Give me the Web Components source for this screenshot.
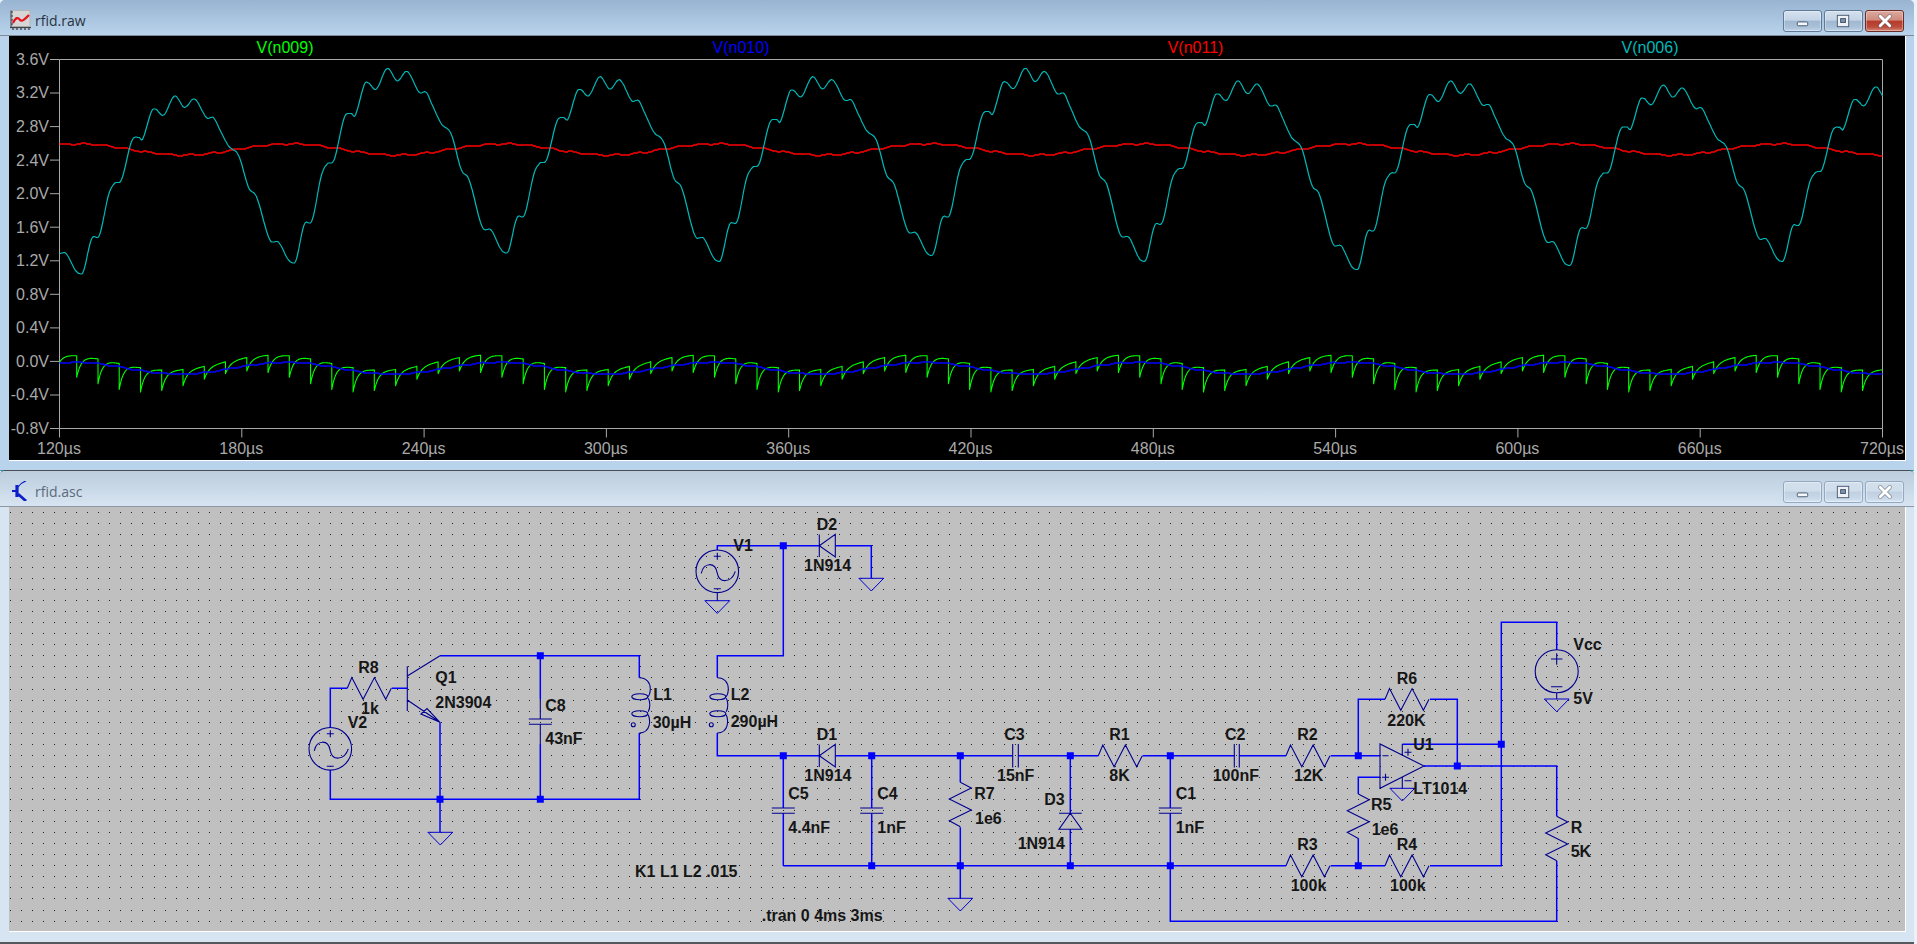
<!DOCTYPE html>
<html><head><meta charset="utf-8"><title>LTspice rfid</title>
<style>
html,body{margin:0;padding:0;height:944px;overflow:hidden;background:#eaf1f8;}
body{display:flex;flex-direction:column;width:1917px;}
</style></head>
<body>
<mdi-window caption="rfid.raw" icon="plot" active><wave-plot></wave-plot></mdi-window>
<mdi-window caption="rfid.asc" icon="sch"><rfid-schematic></rfid-schematic></mdi-window>
<script>
class CaptionButton extends HTMLElement{
  connectedCallback(){
    const kind=this.getAttribute('kind'), on=this.hasAttribute('active');
    const r=this.attachShadow({mode:'open'});
    let bg=on?'linear-gradient(#d3e0ee 0,#c4d4e6 46%,#9fb7d0 50%,#a9c0d8 80%,#c3d5e8 100%)':'linear-gradient(#d3e0ec 0,#cfdcea 46%,#c0d0e1 50%,#c8d8e9 80%,#d9e5f2 100%)';
    if(kind==='close'&&on)bg='linear-gradient(#dba99f 0,#d08a7c 46%,#b53a2a 50%,#bc4c3c 80%,#d58a7a 100%)';
    const g={min:'<rect x="14" y="11" width="11" height="4" rx="1" fill="#f5f8fb" stroke="#44566c" stroke-width="1"/>',
      max:'<rect x="13" y="4" width="12" height="12" fill="#eef2f6" stroke="#4a5a70" stroke-width="1"/><rect x="16.5" y="7.5" width="5" height="4" fill="#7f93ad" stroke="#3e4e66" stroke-width="1"/>',
      close:'<path d="M15 5 L25 15 M25 5 L15 15" stroke="#4d5866" stroke-width="4.6" stroke-linecap="round" opacity="'+(on?.55:.6)+'"/><path d="M15 5 L25 15 M25 5 L15 15" stroke="#fff" stroke-width="3" stroke-linecap="round"/>'}[kind];
    r.innerHTML=`<style>:host{display:block;width:39px;height:22px;box-sizing:border-box;border:1px solid ${on?(kind==='close'?'#6e2a22':'#5f7a98'):'#93a9c2'};border-radius:3px;background:${bg};box-shadow:inset 0 0 0 1px rgba(255,255,255,.35);}
    svg{display:block;width:37px;height:20px}</style><svg viewBox="0 0 39 20">${g}</svg>`;
  }
}
customElements.define('caption-button',CaptionButton);

class WindowIcon extends HTMLElement{
  connectedCallback(){
    const r=this.attachShadow({mode:'open'});
    const plot=`<svg viewBox="0 0 21 20" width="21" height="20"><rect x="2" y="0.5" width="18" height="16" fill="#d6d6d6" stroke="#b4b4b4"/><path d="M1 2h2M1 6h2M1 10h2M1 14h2M3 18v2M7 18v2M11 18v2M15 18v2M19 18v2" stroke="#333" stroke-width="1.2"/><path d="M0 17.5H21" stroke="#444" stroke-width="1.2"/><path d="M1 .5V18" stroke="#444" stroke-width="1"/><path d="M3 13 C6 7,8 7,10 10 C12 12,14 10,19 5" fill="none" stroke="#e8101a" stroke-width="2.2"/></svg>`;
    const sch=`<svg viewBox="0 0 21 20" width="21" height="20"><path d="M2 10H7" stroke="#0b1fc8" stroke-width="2"/><path d="M7 4V16" stroke="#0b1fc8" stroke-width="3.2"/><path d="M8 6 C10 3,13 1,16 0" fill="none" stroke="#0b1fc8" stroke-width="1.2"/><path d="M8 13 L16 20" stroke="#0b1fc8" stroke-width="2.8"/></svg>`;
    r.innerHTML=`<style>:host{display:block;width:21px;height:20px}svg{display:block}</style>${this.getAttribute('kind')==='plot'?plot:sch}`;
  }
}
customElements.define('window-icon',WindowIcon);

class MdiWindow extends HTMLElement{
  connectedCallback(){
    const on=this.hasAttribute('active');
    const r=this.attachShadow({mode:'open'});
    r.innerHTML=`<style>
    :host{display:flex;flex-direction:column;box-sizing:border-box;width:1914px;flex:none;
      height:${on?'470px':'474px'};
      background:${on?'#b9d3ec':'#d7e4f2'};
      border-radius:5px 5px 0 0;
      box-shadow:${on?'0 1px 0 #2aa5bd':'none'};
      ${on?'':'border-top:1px solid #4a4f55;border-bottom:2px solid #55595e;'}
    }
    .bar{display:flex;align-items:flex-start;box-sizing:border-box;height:36px;padding:10px 10px 0 10px;gap:4px;
      background:linear-gradient(${on?'#99b4d1,#b9d3ec':'#bccddd,#d7e4f2'});
      border-radius:5px 5px 0 0;border-bottom:1px solid ${on?'#7f8a96':'#8e98a2'};}
    .title{font:14px "Open Sans","Noto Sans",sans-serif;color:${on?'#26333f':'#5a6a7c'};line-height:22px;flex:1;white-space:nowrap;}
    .btns{display:flex;gap:2px;}
    .body{margin:0 8px 0 9px;border-right:1.5px solid #fff;border-bottom:1.5px solid #fff;height:424px;}
    ::slotted(*){display:block;width:1896px;height:424px}
    </style>
    <div class="bar"><window-icon kind="${this.getAttribute('icon')}"></window-icon><span class="title">${this.getAttribute('caption')}</span>
    <div class="btns"><caption-button kind="min" ${on?'active':''}></caption-button><caption-button kind="max" ${on?'active':''}></caption-button><caption-button kind="close" ${on?'active':''}></caption-button></div></div>
    <div class="body"><slot></slot></div>`;
  }
}
customElements.define('mdi-window',MdiWindow);

class WavePlot extends HTMLElement{
  connectedCallback(){
    const r=this.attachShadow({mode:'open'});
    const L=59.5,R=1882.5,T=59.5,B=428.5,P=212.6,TAU=Math.PI*2,PX=(R-L)/10;
    const grid=[];let txt='';
    const ylab=['3.6V','3.2V','2.8V','2.4V','2.0V','1.6V','1.2V','0.8V','0.4V','0.0V','-0.4V','-0.8V'];
    ylab.forEach((t,i)=>{const y=T+(B-T)*i/11;grid.push(`M50 ${y.toFixed(1)}H${L}`);txt+=`<text class="a" x="49" y="${(y+5.4).toFixed(1)}" text-anchor="end">${t}</text>`;});
    for(let i=0;i<=10;i++){const x=L+PX*i;grid.push(`M${x.toFixed(1)} ${B}V437.5`);txt+=`<text class="a" x="${(x-0.5).toFixed(1)}" y="454" text-anchor="middle">${120+i*60}µs</text>`;}
    // teal: one digitised period (dx from the trough, y in px), fitted to each cycle's own extremes
    const tx=[0,10,18,27,33,40,50,57,61,70,74,82,93,103,113,125,132,138,147,157,167,175,188,197,207,212.6];
    const ty=[262,227,223,183,172,168,130,126,128,100,98,104,85,97,88,108,108,120,138,148,182,192,237,240,259,262];
    const tn=ty.map(y=>(y-85)/177);
    const tang=tn.map((v,i)=>(i===0||i===tn.length-1)?0:(tn[i+1]-tn[i-1])/(tx[i+1]-tx[i-1]));
    const shape=d=>{let i=0;while(i<tx.length-2&&d>tx[i+1])i++;
      const h=tx[i+1]-tx[i],s=(d-tx[i])/h,s2=s*s,s3=s2*s;
      return (2*s3-3*s2+1)*tn[i]+(s3-2*s2+s)*h*tang[i]+(-2*s3+3*s2)*tn[i+1]+(s3-s2)*h*tang[i+1];};
    const toY=v=>362-83.9*v;
    const TV=[1.05,1.18,1.3,1.2,1.27,1.2,1.1,1.15,1.2,1.2];
    const PV=[3.17,3.5,3.4,3.4,3.5,3.35,3.35,3.3,3.28];
    const teal=[];
    for(let x=L;x<=R;x+=1){
      const rel=x-81.6,k=Math.floor(rel/P),d=rel-k*P;
      const yp=toY(k<0?3.0:PV[k]);
      const yt=toY(d<93?TV[Math.max(k,0)]:TV[k+1]);
      teal.push(x.toFixed(1)+','+(Math.round((yp+(yt-yp)*shape(d))*2)/2));
    }
    // red
    const red=[];
    for(let x=L;x<=R;x+=1){
      const y=149.5-5.6*Math.cos(TAU*(x-290)/P)+0.7*Math.cos(TAU*(x-10)/21.26);
      red.push(x.toFixed(1)+','+Math.round(y));
    }
    // blue
    const blue=[];
    for(let x=L;x<=R;x+=1){
      const y=368.2-5.9*Math.cos(TAU*(x-286)/P)+0.5*Math.cos(TAU*(x-3)/21.26);
      blue.push(x.toFixed(1)+','+Math.round(y));
    }
    // green
    const top=x=>362.5-7.5*Math.cos(TAU*(x-275)/P), bot=x=>381.5-10.5*Math.cos(TAU*(x-250)/P);
    const green=[];
    let xk=76.7-21.26;
    for(let x=L;x<=R;x+=1){
      if(x>=xk+21.26){
        xk+=21.26;
        green.push(xk.toFixed(1)+','+top(xk).toFixed(1));
        green.push(xk.toFixed(1)+','+bot(xk).toFixed(1));
      }
      const d=x-xk;
      const yt=top(x),yb=bot(xk);
      green.push(x.toFixed(1)+','+(yt+(yb-yt)*Math.exp(-d/4.6)).toFixed(1));
    }
    const labels=[['V(n009)',285,'#00ff00'],['V(n010)',741,'#0000ff'],['V(n011)',1195.5,'#ff0000'],['V(n006)',1650,'#00b8b8']];
    r.innerHTML=`<style>:host{display:block;background:#000}svg{display:block}
      text{font:16px "Liberation Sans",Arial,sans-serif}.a{fill:#a9a9a9}
      polyline{fill:none;stroke-linejoin:round}</style>
      <svg width="1896" height="424" viewBox="9 36 1896 424">
      <rect x="9" y="36" width="1896" height="424" fill="#000"/>
      <path d="M${L} ${T}H${R}V${B}H${L}Z ${grid.join(' ')}" fill="none" stroke="#a8a8a8" stroke-width="1"/>
      <polyline points="${green.join(' ')}" stroke="#00ff00" stroke-width="1.1"/>
      <polyline points="${blue.join(' ')}" stroke="#0000ff" stroke-width="1.5"/>
      <polyline points="${red.join(' ')}" stroke="#ff0000" stroke-width="1.3"/>
      <polyline points="${teal.join(' ')}" stroke="#00b8b8" stroke-width="1.2"/>
      ${txt}
      ${labels.map(l=>`<text x="${l[1]}" y="53" text-anchor="middle" fill="${l[2]}">${l[0]}</text>`).join('')}
      </svg>`;
  }
}
customElements.define('wave-plot',WavePlot);

class RfidSchematic extends HTMLElement{
  connectedCallback(){
    const r=this.attachShadow({mode:'open'});
    let dots='';
    for(let iy=0;iy<39;iy++){const y=Math.round(512.7+11.05*iy);if(y>931)break;
      for(let ix=0;ix<172;ix++){const x=Math.round(9.85+11.05*ix);if(x>1904)break;dots+=`M${x} ${y}h1v1h-1z`;}}
    const W=[],C=[],J=[],G=[];let X='';
    const w=(...p)=>{let d='M'+p[0][0]+' '+p[0][1];for(let i=1;i<p.length;i++)d+='L'+p[i][0]+' '+p[i][1];W.push(d);};
    const c=d=>C.push(d);
    const j=(x,y)=>J.push(`M${x-3.5} ${y-3.5}h7v7h-7z`);
    const gnd=(x,y)=>G.push(`M${x-12.4} ${y}H${x+12.4}L${x} ${y+12.7}Z`);
    const t=(s,x,y)=>{X+=`<text x="${x}" y="${y}">${s}</text>`;};
    const resH=(x,y)=>c(`M${x} ${y}l4.5 -10.7l11.3 21.7l11.3 -21.7l11.3 21.7l5.6 -11`);
    const resV=(x,y)=>c(`M${x} ${y}l11 5.7l-22 11l22 11l-22 10.7l11 6`);
    const capV=(x,y1,y2)=>c(`M${x-11.5} ${y1}H${x+11.5}M${x-11.5} ${y2}H${x+11.5}`);
    const capH=(x1,x2,y)=>c(`M${x1} ${y-11.7}V${y+11.7}M${x2} ${y-11.7}V${y+11.7}`);
    const diodeH=(y)=>{c(`M819.3 ${y-11.2}V${y+11.2}M835.3 ${y-11.3}V${y+11.3}L819.3 ${y}Z`);};
    const ind=(x,y)=>{c(`M${x} ${y}C${x+7} ${y} ${x+11} ${y+5} ${x+11} ${y+11}C${x+11} ${y+15} ${x+10} ${y+18} ${x+8} ${y+20}`);
      c(`M${x+9} ${y+20.5}C${x+11} ${y+24} ${x+11} ${y+30} ${x+9} ${y+34}`);
      c(`M${x+9} ${y+37}C${x+11} ${y+42} ${x+12} ${y+55} ${x} ${y+55.3}`);
      c(`M${x-7.5} ${y+19}a8 3 0 1 0 16 0a8 3 0 1 0 -16 0`);
      c(`M${x-7.5} ${y+36}a8 3 0 1 0 16 0a8 3 0 1 0 -16 0`);
      c(`M${x-8} ${y+47}a2 2 0 1 0 4 0a2 2 0 1 0 -4 0`);};
    const acs=(x,y)=>{c(`M${x-21.3} ${y}a21.3 21.3 0 1 0 42.6 0a21.3 21.3 0 1 0 -42.6 0`);
      c(`M${x-16} ${y+2}C${x-14} ${y-9} ${x-2} ${y-10} ${x} ${y+2}C${x+2} ${y+12} ${x+14} ${y+12} ${x+18} ${y}`);
      c(`M${x-3.5} ${y-15}h7M${x} ${y-18.5}v7M${x-3.5} ${y+17.5}h7`);};
    const YT=656.7,YB=800.3,YM=756.7,YG=866.7;
    w([347.3,689.3],[330.3,689.3],[330.3,729]);
    w([330.3,771],[330.3,YB],[639.3,YB],[639.3,734]);
    w([391.7,689.3],[407.3,689.3]);
    w([440,YT],[639.3,YT],[639.3,678.7]);
    w([440,723.3],[440,YB]);
    w([440,YB],[440,833.3]);
    w([540.3,YT],[540.3,700]);c('M540.3 700V720');
    w([540.3,745],[540.3,YB]);c('M540.3 725.3V745');
    j(440,YB);j(540.3,YT);j(540.3,YB);gnd(440.3,833.3);
    resH(347.3,689.3);acs(330.3,749.8);
    c('M407.3 667.3V712M407.3 677L440 656.7M407.3 701L440 723.3M421 715L427 709.5L440 723.3Z');
    capV(540.3,720,725.3);ind(639.3,678.7);
    t('R8',358.3,674);t('1k',361,715);t('V2',347.7,729);t('Q1',435.3,684);t('2N3904',435.3,708.7);
    t('C8',545.3,712);t('43nF',545.3,744.7);t('L1',653.3,701.3);t('30µH',652.7,728.7);
    w([717.3,678.3],[717.3,YT],[783.3,YT],[783.3,546.7]);
    w([717.3,551],[717.3,546.7],[819.3,546.7]);
    w([835.3,546.7],[871.3,546.7],[871.3,579.3]);
    w([717.3,734],[717.3,YM],[819.3,YM]);
    j(783.3,546.7);acs(717.3,572.3);c('M717.3 593.6V601.7');gnd(717.3,601.7);gnd(871.3,579.3);
    ind(717.3,678.7);diodeH(546.7);
    t('L2',730.7,700.7);t('290µH',730.7,728.3);t('V1',733.3,551.7);t('D2',816.7,530.7);t('1N914',804,572);
    w([835.3,YM],[1012.7,YM]);w([1018.3,YM],[1098.3,YM]);w([1142.7,YM],[1234.3,YM]);w([1239.3,YM],[1286,YM]);w([1330.7,YM],[1380,YM]);
    diodeH(YM);capH(1012.7,1018.3,YM);capH(1234.3,1239.3,YM);resH(1098.3,YM);resH(1286,YM);
    [783.3,871.7,960.3,1070.3,1170.3,1358.3].forEach(x=>j(x,YM));
    w([783.3,YG],[1286,YG]);w([1330.7,YG],[1385,YG]);w([1430,YG],[1501.3,YG],[1501.3,623.3],[1556.7,623.3],[1556.7,651]);
    resH(1286,YG);resH(1385,YG);
    [871.7,960.3,1070.3,1170.3,1358.3].forEach(x=>j(x,YG));
    w([783.3,YM],[783.3,809]);w([783.3,814.3],[783.3,YG]);capV(783.3,809,814.3);
    w([871.7,YM],[871.7,809]);w([871.7,814.3],[871.7,YG]);capV(871.7,809,814.3);
    w([1170.3,YM],[1170.3,809]);w([1170.3,814.3],[1170.3,922.3],[1556.7,922.3],[1556.7,861.7]);capV(1170.3,809,814.3);
    w([960.3,YM],[960.3,783.3]);w([960.3,828.3],[960.3,899.3]);resV(960.3,783.3);gnd(960.3,899.3);
    w([1070.3,YM],[1070.3,814.3]);w([1070.3,830.3],[1070.3,YG]);
    c('M1059 814.3H1081.7M1070.3 814.3L1081.7 830.3H1059Z');
    t('D1',816.7,740.7);t('1N914',804.3,781.7);t('C5',788.3,800);t('4.4nF',788.3,834);t('C4',877.3,800);t('1nF',877.3,834);
    t('R7',974.3,800);t('1e6',975,825);t('C3',1004.3,740.7);t('15nF',997,781.7);t('D3',1044.3,805.7);t('1N914',1017.7,850);
    t('R1',1109.3,740.7);t('8K',1109.3,781.7);t('C1',1175.7,800);t('1nF',1175.7,834);
    c('M1380 745V789.3L1424 767Z M1382.5 756.7h6 M1382 778.3h7M1385.5 774.8v7 M1404.5 753.3h7M1408 749.8v7 M1404.5 781.7h7');
    c('M1402.3 756V745.3M1402.3 778V789.3');
    w([1402.3,745.3],[1501.3,745.3]);j(1501.3,745.3);
    w([1424,767],[1556.7,767],[1556.7,817.3]);j(1457.3,767);
    w([1457.3,767],[1457.3,700.3],[1430,700.3]);w([1385,700.3],[1358.3,700.3],[1358.3,YM]);resH(1385,700.3);
    w([1380,778.3],[1358.3,778.3],[1358.3,795]);w([1358.3,839.3],[1358.3,YG]);resV(1358.3,795);
    gnd(1402.3,789.3);
    resV(1556.7,817.3);
    c('M1535.2 672.3a21.5 21.5 0 1 0 43 0a21.5 21.5 0 1 0 -43 0 M1551 660h11.4M1556.7 654.3v11.4 M1551 687.7h11.4 M1556.7 693.8V700');
    gnd(1556.7,700);
    t('C2',1225,740.7);t('100nF',1212.7,781.7);t('R2',1297.3,740.7);t('12K',1294,781.7);t('R6',1396.7,684.7);t('220K',1387.3,726.7);
    t('U1',1413.3,751.3);t('LT1014',1413.3,795);t('R5',1371,811);t('1e6',1371.7,836);t('R3',1297.3,850.7);t('100k',1290.7,891.7);
    t('R4',1396.7,850.7);t('100k',1390,891.7);t('Vcc',1573.3,650.7);t('5V',1573.3,705.3);t('R',1570.7,834);t('5K',1570.7,858);
    t('K1 L1 L2 .015',635,877.7);t('.tran 0 4ms 3ms',761.7,921.7);
    r.innerHTML=`<style>:host{display:block;background:#c0c0c0}svg{display:block}
      text{font:bold 16px "Liberation Sans",Arial,sans-serif;fill:#161616}</style>
      <svg width="1896" height="424" viewBox="9 508 1896 424">
      <path d="${dots}" fill="#222" shape-rendering="crispEdges"/>
      <path d="${W.join(' ')}" fill="none" stroke="#0000ff" stroke-width="1.5"/>
      <path d="${C.join(' ')}" fill="none" stroke="#000090" stroke-width="1.1"/>
      <path d="${G.join(' ')}" fill="none" stroke="#0000d0" stroke-width="1"/>
      <path d="${J.join(' ')}" fill="#0000ff"/>
      ${X}
      </svg>`;
  }
}
customElements.define('rfid-schematic',RfidSchematic);
</script>
</body></html>
